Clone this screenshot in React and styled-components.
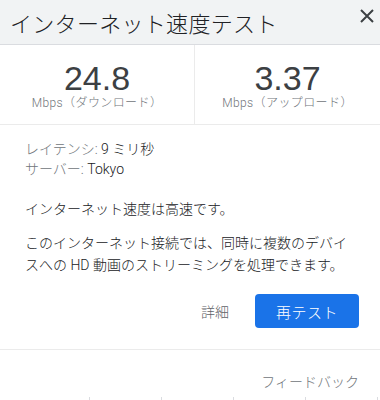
import React from 'react'
import styled, { createGlobalStyle } from 'styled-components'

const GlobalStyle = createGlobalStyle`
  html, body {
    margin: 0;
    padding: 0;
    background: #ffffff;
  }
  body {
    font-family: Roboto, Arial, "Noto Sans CJK JP", sans-serif;
    color: #202124;
  }
`

const Card = styled.div`
  width: 380px;
  height: 400px;
  overflow: hidden;
  background: #fff;
`

const Header = styled.div`
  height: 44px;
  display: flex;
  align-items: center;
  justify-content: space-between;
  padding: 0 6px 0 10px;
  background: #f1f3f4;
  border-bottom: 1px solid #dadce0;
`

const Title = styled.h1`
  margin: 0;
  font-family: "Noto Sans CJK JP", sans-serif;
  font-size: 22px;
  font-weight: 300;
  line-height: 28px;
  color: #202124;
  letter-spacing: 0.3px;
`

const CloseButton = styled.button`
  border: 0;
  background: none;
  padding: 0;
  width: 14px;
  height: 14px;
  margin-top: -12px;
  display: flex;
  align-items: center;
  justify-content: center;
`

const Stats = styled.div`
  display: grid;
  grid-template-columns: 194px 1fr;
  border-bottom: 1px solid #ebebeb;
`

const Stat = styled.div`
  height: 79px;
  box-sizing: border-box;
  padding-top: 16px;
  text-align: center;
  border-left: ${p => (p.$divider ? '1px solid #ebebeb' : '0')};
`

const Value = styled.div`
  font-family: "Liberation Sans", Arial, sans-serif;
  font-size: 34px;
  line-height: 34px;
  color: #3c4043;
`

const Unit = styled.div`
  font-family: Roboto, "Noto Sans CJK JP", sans-serif;
  font-size: 12px;
  line-height: 16px;
  font-weight: 300;
  color: #70757a;
  letter-spacing: 0.4px;
`

const Body = styled.div`
  padding: 14px 21px 0 25px;
  font-family: Roboto, "Noto Sans CJK JP", sans-serif;
  font-size: 14px;
  font-weight: 300;
  color: #202124;
`

const Meta = styled.div`
  line-height: 20px;
`

const Label = styled.span`
  color: #70757a;
`

const Text = styled.p`
  margin: ${p => p.$mt || 0}px 0 0;
  line-height: 22px;
`

const Actions = styled.div`
  display: flex;
  justify-content: flex-end;
  align-items: center;
  gap: 12px;
  margin-top: 17px;
  padding-bottom: 20px;
`

const TextButton = styled.button`
  border: 0;
  background: none;
  font-family: "Noto Sans CJK JP", sans-serif;
  font-size: 14px;
  font-weight: 300;
  color: #5f6368;
  padding: 8px 14px;
`

const PrimaryButton = styled.button`
  border: 0;
  width: 104px;
  height: 34px;
  border-radius: 4px;
  background: #1a73e8;
  color: #fff;
  font-family: "Noto Sans CJK JP", sans-serif;
  font-size: 15px;
  font-weight: 300;
  letter-spacing: 0.5px;
`

const Footer = styled.div`
  border-top: 1px solid #ebebeb;
  padding: 21px 21px 0 25px;
  display: flex;
  justify-content: flex-end;
`

const Feedback = styled.span`
  font-family: "Noto Sans CJK JP", sans-serif;
  font-size: 14px;
  font-weight: 300;
  line-height: 20px;
  color: #70757a;
`

const Ticks = styled.div`
  display: flex;
  justify-content: space-between;
  padding: 6px 2px 0 89px;
`

const Tick = styled.span`
  width: 1px;
  height: 4px;
  background: #dadce0;
`

export default function App() {
  return (
    <Card>
      <GlobalStyle />
      <Header>
        <Title>インターネット速度テスト</Title>
        <CloseButton aria-label="閉じる">
          <svg width="14" height="14" viewBox="0 0 14 14">
            <path d="M1 1 L13 13 M13 1 L1 13" stroke="#3c4043" strokeWidth="2" />
          </svg>
        </CloseButton>
      </Header>
      <Stats>
        <Stat>
          <Value>24.8</Value>
          <Unit>Mbps（ダウンロード）</Unit>
        </Stat>
        <Stat $divider>
          <Value>3.37</Value>
          <Unit>Mbps（アップロード）</Unit>
        </Stat>
      </Stats>
      <Body>
        <Meta><Label>レイテンシ:</Label> 9 ミリ秒</Meta>
        <Meta><Label>サーバー:</Label> Tokyo</Meta>
        <Text $mt={19}>インターネット速度は高速です。</Text>
        <Text $mt={12}>このインターネット接続では、同時に複数のデバイスへの HD 動画のストリーミングを処理できます。</Text>
        <Actions>
          <TextButton>詳細</TextButton>
          <PrimaryButton>再テスト</PrimaryButton>
        </Actions>
      </Body>
      <Footer>
        <Feedback>フィードバック</Feedback>
      </Footer>
      <Ticks>
        {[0, 1, 2, 3, 4].map(i => <Tick key={i} />)}
      </Ticks>
    </Card>
  )
}
